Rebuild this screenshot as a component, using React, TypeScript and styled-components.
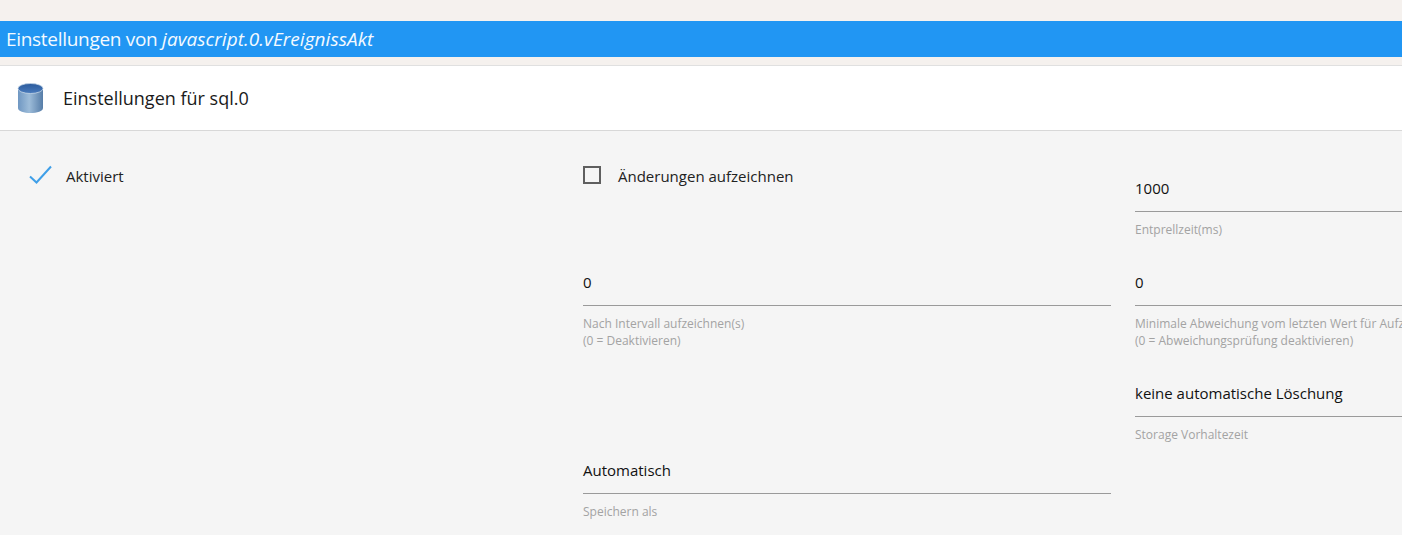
import styled, {createGlobalStyle} from "styled-components";

const GlobalStyle = createGlobalStyle`
  html, body {
    margin: 0;
    padding: 0;
    height: 100%;
    overflow: hidden;
    background: #f5f1ee;
    font-family: "Open Sans", "Noto Sans", "Liberation Sans", sans-serif;
  }
`

const Page = styled.div`
  width: 1402px;
  height: 535px;
  overflow: hidden;
  padding-top: 21px;
  box-sizing: border-box;
  display: flex;
  flex-direction: column;
`

const TitleBar = styled.div`
  height: 36px;
  flex: none;
  display: flex;
  align-items: center;
  padding-left: 6px;
  background: #2196f3;
  color: #f4faff;
  font-size: 19px;
  letter-spacing: -0.3px;
  white-space: pre;

  em {
    letter-spacing: 0.05px;
  }
`

const Header = styled.div`
  height: 66px;
  flex: none;
  margin-top: 8px;
  box-sizing: border-box;
  display: flex;
  align-items: center;
  padding-left: 17px;
  gap: 19px;
  background: #fff;
  border-top: 1px solid #e0e0e0;
  border-bottom: 1px solid #d8d8d8;
  font-size: 18px;
  color: #1a1a1a;
`

const Content = styled.div`
  flex: 1;
  background: #f5f5f5;
  padding: 33px 0 0 31px;
  display: grid;
  grid-template-columns: repeat(3, 528px);
  column-gap: 24px;
  grid-template-rows: 101px 105px 84px auto;
`

const CheckRow = styled.div`
  display: flex;
  align-items: flex-start;
  height: 24px;
  font-size: 15px;
  color: #222;
  line-height: 24px;
`

const CheckMark = styled.svg`
  width: 24px;
  height: 24px;
  margin-left: -2px;
  margin-right: 13px;
`

const CheckBox = styled.span`
  width: 14px;
  height: 14px;
  margin: 2px 17px 0 0;
  border: 2px solid #5f5f5f;
  flex: none;
`

const Field = styled.div<{$top: number; $col: number; $row: number}>`
  grid-column: ${(props) => props.$col};
  grid-row: ${(props) => props.$row};
  padding-top: ${(props) => props.$top}px;
`

const Value = styled.div`
  height: 36px;
  box-sizing: border-box;
  border-bottom: 1px solid #9a9a9a;
  font-size: 15px;
  line-height: 24px;
  color: #111;
`

const Help = styled.div`
  margin-top: 9px;
  font-size: 12px;
  line-height: 17px;
  color: #a3a3a3;
  white-space: nowrap;
`

const DatabaseIcon = () => (
	<svg width="27" height="32" viewBox="0 0 27 32">
		<defs>
			<linearGradient id="dbBody" x1="0" x2="1" y1="0" y2="0">
				<stop offset="0" stopColor="#6f97c2"/>
				<stop offset="0.45" stopColor="#9dbcd9"/>
				<stop offset="1" stopColor="#567da8"/>
			</linearGradient>
			<linearGradient id="dbTop" x1="0" x2="0" y1="0" y2="1">
				<stop offset="0" stopColor="#2b5a9c"/>
				<stop offset="1" stopColor="#4a7cbd"/>
			</linearGradient>
		</defs>
		<path d="M1 7 V26 C1 29.5 7 31 13.5 31 C20 31 26 29.5 26 26 V7 Z" fill="url(#dbBody)"/>
		<ellipse cx="13.5" cy="6.5" rx="12.5" ry="5" fill="url(#dbTop)" stroke="#c3d4e6" strokeWidth="0.8"/>
	</svg>
)

export default function App() {
	return (
		<Page>
			<GlobalStyle/>
			<TitleBar>
				Einstellungen von <em>javascript.0.vEreignissAkt</em>
			</TitleBar>
			<Header>
				<DatabaseIcon/>
				Einstellungen für sql.0
			</Header>
			<Content>
				<CheckRow>
					<CheckMark viewBox="0 0 24 24">
						<path d="M1 12.5 L7.5 18.5 L22 2.5" fill="none" stroke="#3f9fe8" strokeWidth="2"/>
					</CheckMark>
					Aktiviert
				</CheckRow>
				<CheckRow>
					<CheckBox/>
					Änderungen aufzeichnen
				</CheckRow>
				<Field $col={3} $row={1} $top={12}>
					<Value>1000</Value>
					<Help>Entprellzeit(ms)</Help>
				</Field>
				<Field $col={2} $row={2} $top={5}>
					<Value>0</Value>
					<Help>Nach Intervall aufzeichnen(s)<br/>(0 = Deaktivieren)</Help>
				</Field>
				<Field $col={3} $row={2} $top={5}>
					<Value>0</Value>
					<Help>Minimale Abweichung vom letzten Wert für Aufzeichnung<br/>(0 = Abweichungsprüfung deaktivieren)</Help>
				</Field>
				<Field $col={3} $row={3} $top={11}>
					<Value>keine automatische Löschung</Value>
					<Help>Storage Vorhaltezeit</Help>
				</Field>
				<Field $col={2} $row={4} $top={4}>
					<Value>Automatisch</Value>
					<Help>Speichern als</Help>
				</Field>
			</Content>
		</Page>
	)
}
